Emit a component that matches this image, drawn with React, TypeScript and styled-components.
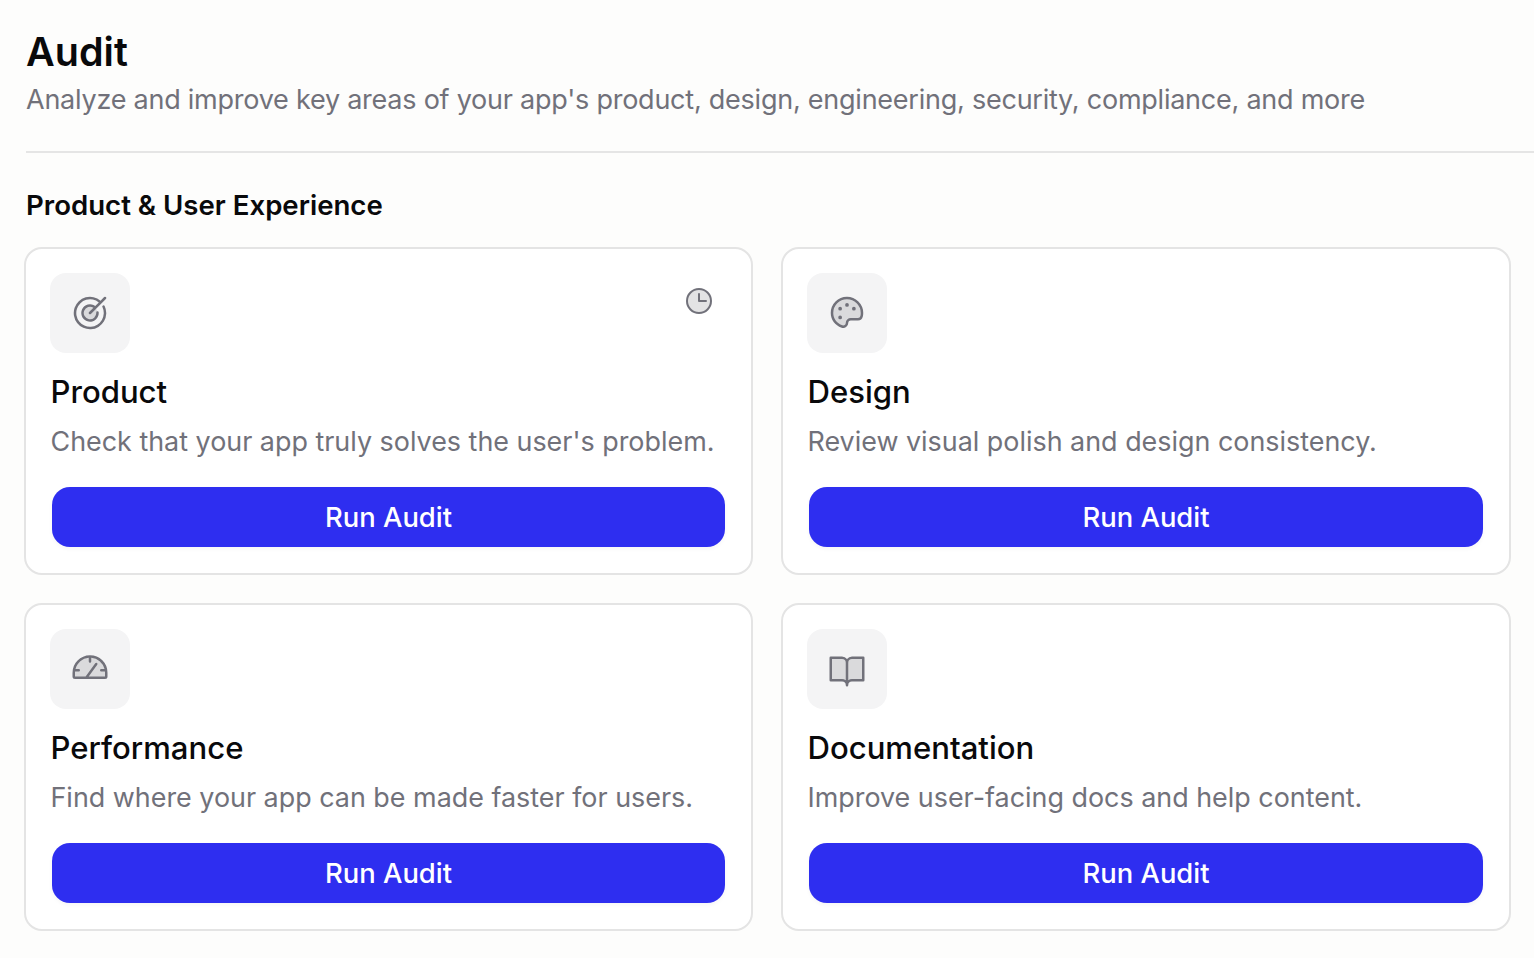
import React from "react";
import styled, { createGlobalStyle } from "styled-components";
import { PiTargetDuotone, PiPaletteDuotone, PiGaugeDuotone, PiBookOpenDuotone, PiClockDuotone } from "react-icons/pi";

const Global = createGlobalStyle`
  html, body { margin: 0; padding: 0; background: #fdfdfc; overflow: hidden; }
  body { font-family: Inter, "Liberation Sans", sans-serif; -webkit-font-smoothing: antialiased; }
`;

const Page = styled.main`
  width: 1534px;
  height: 958px;
  box-sizing: border-box;
  padding: 28px 0 0 24px;
`;

const Header = styled.header`
  margin-left: 2px;
  padding-bottom: 31px;
  border-bottom: 2px solid #e5e5e5;
`;

const Title = styled.h1`
  margin: 0;
  font-size: 39.5px;
  line-height: 48px;
  font-weight: 600;
  color: #09090b;
`;

const Subtitle = styled.p`
  margin: 4px 0 0;
  font-size: 27px;
  line-height: 40px;
  font-weight: 400;
  letter-spacing: -0.24px;
  color: #71717a;
`;

const SectionTitle = styled.h2`
  margin: 34px 0 0 2px;
  font-size: 27.6px;
  line-height: 36px;
  font-weight: 600;
  color: #09090b;
`;

const Grid = styled.div`
  display: grid;
  grid-template-columns: 728.5px 729.5px;
  gap: 28px 28.5px;
  margin-top: 24px;
`;

const Card = styled.section`
  position: relative;
  box-sizing: border-box;
  height: 328px;
  background: #fff;
  border: 2px solid #e4e4e4;
  border-radius: 18px;
  padding: 24px 25px 0 24px;
`;

const IconBox = styled.div`
  display: flex;
  align-items: center;
  justify-content: center;
  width: 80px;
  height: 80px;
  border-radius: 16px;
  background: #f4f4f5;
  color: #71717a;
`;

const Corner = styled.div`
  position: absolute;
  top: 36px;
  right: 36px;
  display: flex;
  color: #71717a;
`;

const CardTitle = styled.h3`
  margin: 19px 0 0 0.5px;
  font-size: 31.1px;
  line-height: 40px;
  font-weight: 500;
  color: #09090b;
`;

const CardText = styled.p`
  margin: 9px 0 0 0.5px;
  font-size: 26.9px;
  line-height: 40px;
  color: #71717a;
  white-space: nowrap;
`;

const RunButton = styled.button`
  display: block;
  box-sizing: border-box;
  width: calc(100% - 2.5px);
  height: 60px;
  margin: 26px 0 0 2px;
  padding: 0;
  border: 0;
  border-radius: 18px;
  background: #2e2ef0;
  color: #fff;
  font-family: inherit;
  font-size: 27.4px;
  font-weight: 500;
  box-shadow: 0 2px 4px rgba(0, 0, 0, 0.04);
`;

const cards = [
  { title: "Product", text: "Check that your app truly solves the user's problem.", Icon: PiTargetDuotone, clock: true },
  { title: "Design", text: "Review visual polish and design consistency.", Icon: PiPaletteDuotone },
  { title: "Performance", text: "Find where your app can be made faster for users.", Icon: PiGaugeDuotone },
  { title: "Documentation", text: "Improve user-facing docs and help content.", Icon: PiBookOpenDuotone },
];

export default function App() {
  return (
    <Page>
      <Global />
      <Header>
        <Title>Audit</Title>
        <Subtitle>Analyze and improve key areas of your app's product, design, engineering, security, compliance, and more</Subtitle>
      </Header>
      <SectionTitle>Product &amp; User Experience</SectionTitle>
      <Grid>
        {cards.map(({ title, text, Icon, clock }) => (
          <Card key={title}>
            <IconBox><Icon size={40} /></IconBox>
            {clock && <Corner><PiClockDuotone size={32} /></Corner>}
            <CardTitle>{title}</CardTitle>
            <CardText>{text}</CardText>
            <RunButton>Run Audit</RunButton>
          </Card>
        ))}
      </Grid>
    </Page>
  );
}
